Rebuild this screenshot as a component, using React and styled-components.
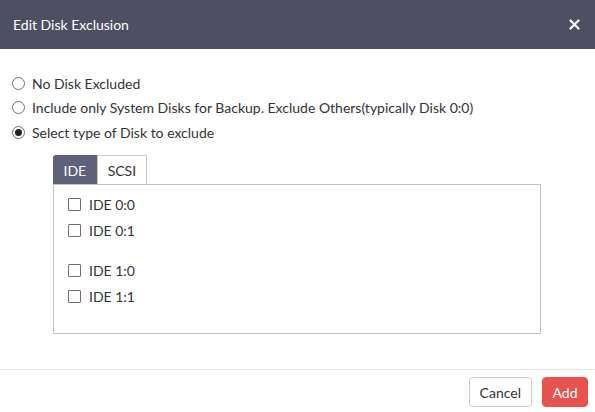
import React, { useState } from 'react';
import styled, { createGlobalStyle } from 'styled-components';

const GlobalStyle = createGlobalStyle`
    html, body {
        margin: 0;
        padding: 0;
        background: #ffffff;
    }
    body {
        font-family: Lato, 'Open Sans', sans-serif;
        color: #333333;
    }
    * {
        box-sizing: border-box;
    }
`;

const Dialog = styled.div`
    display: flex;
    flex-direction: column;
    width: 595px;
    height: 412px;
    background: #ffffff;
`;

const Header = styled.header`
    display: flex;
    justify-content: space-between;
    align-items: center;
    height: 49px;
    padding: 0 14px 0 13px;
    background-color: #4e4f63;
    color: #ffffff;
`;

const Title = styled.h1`
    margin: 0;
    font-size: 14px;
    font-weight: 400;
`;

const CloseBtn = styled.button`
    display: flex;
    align-items: center;
    justify-content: center;
    width: 14px;
    height: 14px;
    padding: 0;
    border: none;
    background: none;
    cursor: pointer;
`;

const Body = styled.div`
    flex: 1;
    padding: 25px 13px 0 12px;
`;

const RadioList = styled.div`
    display: flex;
    flex-direction: column;
    gap: 6.5px;
`;

const RadioRow = styled.label`
    display: flex;
    align-items: center;
    gap: 7px;
    height: 18px;
    font-size: 14px;
    color: #333333;
    cursor: pointer;
`;

const RadioDot = styled.span`
    display: inline-flex;
    align-items: center;
    justify-content: center;
    width: 13px;
    height: 13px;
    border: 1px solid #707070;
    border-radius: 50%;
    background: #ffffff;

    &::after {
        content: '';
        width: 7px;
        height: 7px;
        border-radius: 50%;
        background: #222222;
        display: ${(p) => (p.$checked ? 'block' : 'none')};
    }
`;

const TabArea = styled.div`
    margin: 14px 0 0 41px;
    width: 488px;
`;

const TabBar = styled.div`
    display: flex;
`;

const Tab = styled.button`
    height: 29px;
    padding: 0 ${(p) => p.$pad}px;
    border: 1px solid ${(p) => (p.$active ? '#5f6079' : '#c9c9c9')};
    border-bottom: none;
    border-radius: ${(p) => (p.$active ? '3px 0 0 0' : '0')};
    background: ${(p) => (p.$active ? '#5f6079' : '#ffffff')};
    color: ${(p) => (p.$active ? '#ffffff' : '#333333')};
    font-family: Lato, sans-serif;
    font-size: 14px;
    cursor: pointer;
`;

const Panel = styled.div`
    height: 150px;
    padding: 10px 0 0 14px;
    border: 1px solid #c4c4bc;
`;

const CheckGroup = styled.div`
    display: flex;
    flex-direction: column;
    gap: 8px;
    margin-bottom: ${(p) => p.$gap || 0}px;
`;

const CheckRow = styled.label`
    display: flex;
    align-items: center;
    gap: 8px;
    height: 18px;
    font-size: 14px;
    color: #333333;
    cursor: pointer;
`;

const CheckBox = styled.span`
    display: inline-flex;
    align-items: center;
    justify-content: center;
    width: 13px;
    height: 13px;
    border: 1px solid #6f6f6f;
    border-radius: 1px;
    background: #ffffff;
    font-size: 11px;
    line-height: 1;
`;

const Footer = styled.footer`
    display: flex;
    justify-content: flex-end;
    gap: 10px;
    height: 43px;
    padding: 7px 7px 0 0;
    border-top: 1px solid #e5e5e5;
`;

const Button = styled.button`
    height: 30px;
    padding: 0 ${(p) => p.$pad}px;
    border: 1px solid ${(p) => (p.$primary ? '#e85350' : '#cccccc')};
    border-radius: 4px;
    background: ${(p) => (p.$primary ? '#e85350' : '#ffffff')};
    color: ${(p) => (p.$primary ? '#ffffff' : '#333333')};
    font-family: Lato, sans-serif;
    font-size: 14px;
    cursor: pointer;
`;

const radios = [
    'No Disk Excluded',
    'Include only System Disks for Backup. Exclude Others(typically Disk 0:0)',
    'Select type of Disk to exclude',
];

const diskGroups = {
    IDE: [
        ['IDE 0:0', 'IDE 0:1'],
        ['IDE 1:0', 'IDE 1:1'],
    ],
    SCSI: [['SCSI 0:0', 'SCSI 0:1']],
};

export default function App() {
    const [choice, setChoice] = useState(2);
    const [tab, setTab] = useState('IDE');
    const [checked, setChecked] = useState({});

    const toggle = (name) => setChecked((c) => ({ ...c, [name]: !c[name] }));

    return (
        <>
            <GlobalStyle />
            <Dialog>
                <Header>
                    <Title>Edit Disk Exclusion</Title>
                    <CloseBtn aria-label="close">
                        <svg width="11" height="11" viewBox="0 0 11 11">
                            <path d="M1.5 1.5 L9.5 9.5 M9.5 1.5 L1.5 9.5" stroke="#ffffff" strokeWidth="2.2" strokeLinecap="round" />
                        </svg>
                    </CloseBtn>
                </Header>
                <Body>
                    <RadioList>
                        {radios.map((r, i) => (
                            <RadioRow key={r} onClick={() => setChoice(i)}>
                                <RadioDot $checked={choice === i} />
                                {r}
                            </RadioRow>
                        ))}
                    </RadioList>
                    <TabArea>
                        <TabBar>
                            <Tab $active={tab === 'IDE'} $pad={9.5} onClick={() => setTab('IDE')}>
                                IDE
                            </Tab>
                            <Tab $active={tab === 'SCSI'} $pad={10} onClick={() => setTab('SCSI')}>
                                SCSI
                            </Tab>
                        </TabBar>
                        <Panel>
                            {diskGroups[tab].map((group, gi) => (
                                <CheckGroup key={gi} $gap={22}>
                                    {group.map((name) => (
                                        <CheckRow key={name} onClick={() => toggle(name)}>
                                            <CheckBox>{checked[name] ? '✓' : ''}</CheckBox>
                                            {name}
                                        </CheckRow>
                                    ))}
                                </CheckGroup>
                            ))}
                        </Panel>
                    </TabArea>
                </Body>
                <Footer>
                    <Button $pad={10}>Cancel</Button>
                    <Button $primary $pad={9.5}>
                        Add
                    </Button>
                </Footer>
            </Dialog>
        </>
    );
}
